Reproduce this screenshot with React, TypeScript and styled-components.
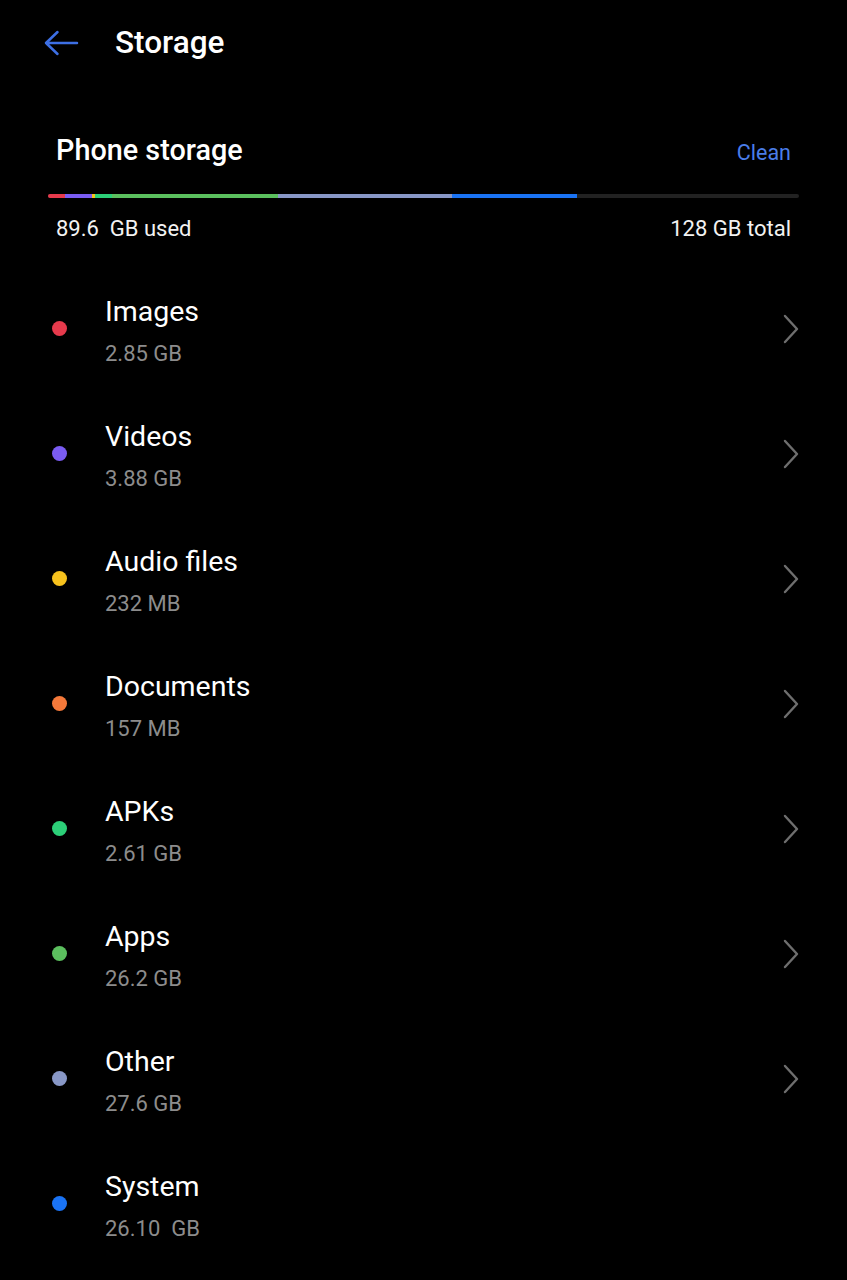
import styled, { createGlobalStyle } from "styled-components";

const GlobalStyle = createGlobalStyle`
  html, body {
    margin: 0;
    padding: 0;
    background: #000;
  }
  body {
    font-family: Roboto, "Noto Sans", "Liberation Sans", sans-serif;
    color: #fff;
  }
`;

type Category = {
  name: string;
  size: string;
  color: string;
  bar: number;
  arrow: boolean;
};

const categories: Category[] = [
  { name: "Images", size: "2.85 GB", color: "#e63a4c", bar: 17, arrow: true },
  { name: "Videos", size: "3.88 GB", color: "#7a5cf2", bar: 27, arrow: true },
  { name: "Audio files", size: "232 MB", color: "#f7c21d", bar: 3, arrow: true },
  { name: "Documents", size: "157 MB", color: "#f5793a", bar: 0, arrow: true },
  { name: "APKs", size: "2.61 GB", color: "#2ccf78", bar: 17, arrow: true },
  { name: "Apps", size: "26.2 GB", color: "#5bbf5e", bar: 166, arrow: true },
  { name: "Other", size: "27.6 GB", color: "#8897c6", bar: 174, arrow: true },
  { name: "System", size: "26.10  GB", color: "#1a73f4", bar: 125, arrow: false },
];

const BAR_WIDTH = 751;

const Page = styled.div`
  width: 847px;
  min-height: 1280px;
  background: #000;
`;

const Header = styled.header`
  display: flex;
  align-items: center;
  height: 85px;
  padding-left: 44px;
`;

const BackButton = styled.button`
  display: flex;
  align-items: center;
  background: none;
  border: 0;
  padding: 0;
  cursor: pointer;
`;

const Title = styled.h1`
  margin: 0 0 0 36px;
  font-size: 31.5px;
  font-weight: 500;
  color: #fff;
`;

const Section = styled.section`
  padding: 35px 48px 0 48px;
`;

const SectionHead = styled.div`
  display: flex;
  align-items: center;
  justify-content: space-between;
  height: 60px;
  padding: 0 8px;
`;

const SectionTitle = styled.h2`
  margin: 0;
  font-size: 28.8px;
  font-weight: 500;
  color: #fff;
`;

const CleanLink = styled.span`
  margin-top: 4px;
  font-size: 21.5px;
  color: #4a7de8;
`;

const Bar = styled.div`
  display: flex;
  height: 4px;
  margin-top: 14px;
  border-radius: 2px;
  overflow: hidden;
  background: #222;
`;

const Segment = styled.div<{ $color: string }>`
  height: 100%;
  background: ${(p) => p.$color};
`;

const Usage = styled.div`
  display: flex;
  justify-content: space-between;
  margin-top: 18px;
  padding: 0 8px;
  font-size: 22px;
  line-height: 26px;
  color: #f2f2f2;
`;

const UsedLabel = styled.span`
  white-space: pre;
`;

const List = styled.ul`
  list-style: none;
  margin: 24px 0 0 0;
  padding: 0;
`;

const Row = styled.li`
  display: flex;
  align-items: center;
  height: 125px;
  padding: 0 48px 0 52px;
`;

const Dot = styled.span<{ $color: string }>`
  width: 15px;
  height: 15px;
  border-radius: 50%;
  background: ${(p) => p.$color};
  flex-shrink: 0;
`;

const Text = styled.div`
  display: flex;
  flex-direction: column;
  margin-left: 38px;
  padding-top: 5px;
  flex: 1;
`;

const Name = styled.span`
  font-size: 28.5px;
  line-height: 34px;
  color: #fff;
`;

const Size = styled.span`
  margin-top: 11px;
  font-size: 22px;
  line-height: 28px;
  color: #8c8c8c;
  white-space: pre;
`;

const Chevron = () => (
  <svg width="16" height="30" viewBox="0 0 16 30" fill="none">
    <path d="M2 2 L14 15 L2 28" stroke="#6e6e6e" strokeWidth="2.4" strokeLinecap="round" strokeLinejoin="round" />
  </svg>
);

const BackArrow = () => (
  <svg width="35" height="26" viewBox="0 0 35 26" fill="none">
    <path d="M2 13 H33 M13.5 2 L2 13 L13.5 24" stroke="#3d6fe4" strokeWidth="2.5" strokeLinecap="round" strokeLinejoin="round" />
  </svg>
);

const App = () => {
  return (
    <Page>
      <GlobalStyle />
      <Header>
        <BackButton aria-label="Back">
          <BackArrow />
        </BackButton>
        <Title>Storage</Title>
      </Header>
      <Section>
        <SectionHead>
          <SectionTitle>Phone storage</SectionTitle>
          <CleanLink>Clean</CleanLink>
        </SectionHead>
        <Bar>
          {categories
            .filter((c) => c.bar > 0)
            .map((c) => (
              <Segment
                key={c.name}
                $color={c.color}
                style={{ width: `${(c.bar / BAR_WIDTH) * 100}%` }}
              />
            ))}
        </Bar>
        <Usage>
          <UsedLabel>89.6  GB used</UsedLabel>
          <span>128 GB total</span>
        </Usage>
      </Section>
      <List>
        {categories.map((c) => (
          <Row key={c.name}>
            <Dot $color={c.color} />
            <Text>
              <Name>{c.name}</Name>
              <Size>{c.size}</Size>
            </Text>
            {c.arrow && <Chevron />}
          </Row>
        ))}
      </List>
    </Page>
  );
};

export default App;
